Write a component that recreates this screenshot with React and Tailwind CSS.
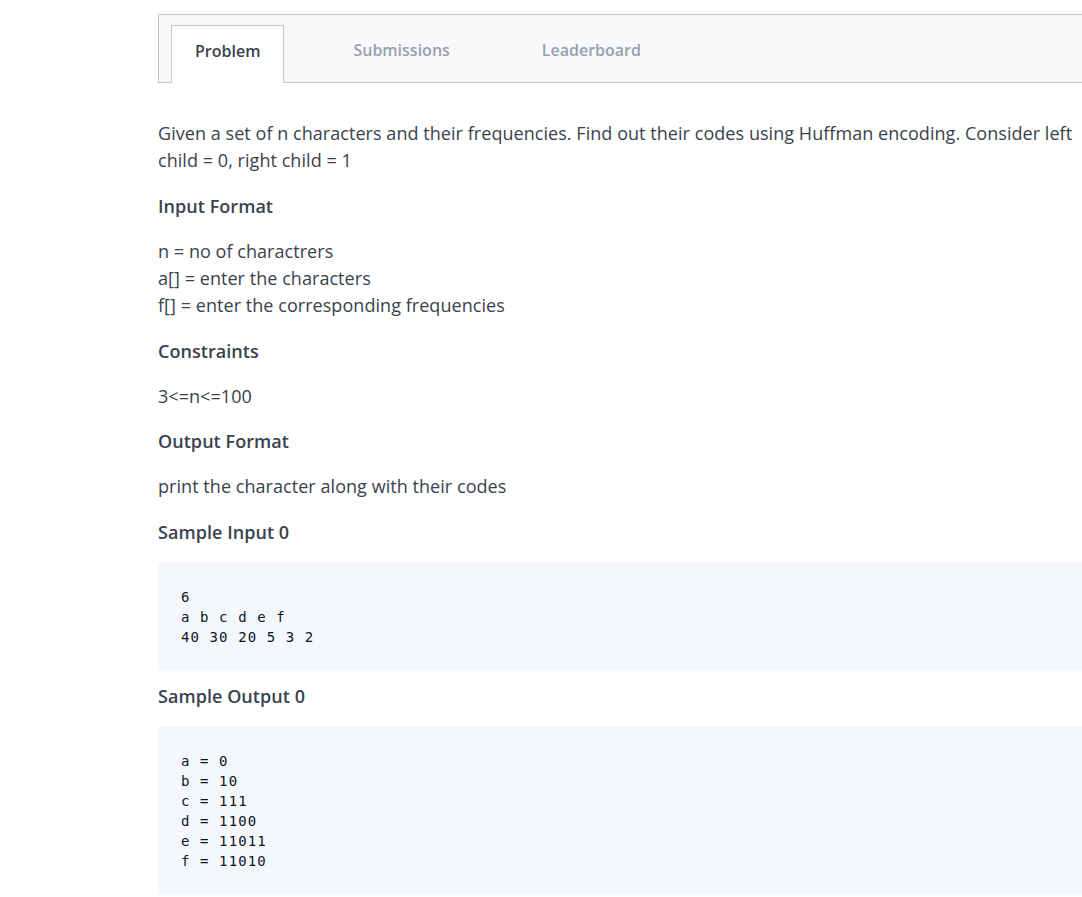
import React from 'react';

const tabs = ['Problem', 'Submissions', 'Leaderboard'];

function Heading({ children, className = '' }) {
  return <h3 className={`font-semibold text-[18px] leading-[27px] text-[#39424e] ${className}`}>{children}</h3>;
}

function Code({ lines, className = '' }) {
  return (
    <pre className={`bg-[#f4f8fd] pl-[23px] pt-6 pb-[23px] font-['DejaVu_Sans_Mono',monospace] text-[14px] leading-[20px] tracking-[1.1px] text-[#0e141e] ${className}`}>
      {lines.join('\n')}
    </pre>
  );
}

export default function App() {
  return (
    <div className="w-full overflow-hidden bg-white min-h-[897px] font-['Open_Sans',sans-serif] text-[#39424e]">
      <div className="ml-[158px] w-[945px] pt-[14px]">
        <div className="flex h-[69px] items-end border border-[#c2c7d0] bg-[#f8f9fb] pl-3">
          {tabs.map((t, i) => (
            <div
              key={t}
              className={
                i === 0
                  ? 'relative -mb-px flex h-[58px] items-center border border-b-0 border-[#c2c7d0] bg-white px-[23px] text-[16px] font-semibold text-[#39424e]'
                  : 'ml-[46px] flex h-[57px] items-center px-[23px] text-[16px] font-semibold text-[#979faf]'
              }
            >
              <span className="-mt-[8px]">{t}</span>
            </div>
          ))}
        </div>

        <div className="pt-[37px] text-[18px] leading-[27px] tracking-[0.05px]">
          <p>Given a set of n characters and their frequencies. Find out their codes using Huffman encoding. Consider left child = 0, right child = 1</p>

          <Heading className="mt-[18.5px]">Input Format</Heading>
          <p className="mt-[18px]">
            n = no of charactrers<br />
            a[] = enter the characters<br />
            f[] = enter the corresponding frequencies
          </p>

          <Heading className="mt-[19px]">Constraints</Heading>
          <p className="mt-[18px]">3&lt;=n&lt;=100</p>

          <Heading className="mt-[18px]">Output Format</Heading>
          <p className="mt-[18px]">print the character along with their codes</p>

          <Heading className="mt-[19px]">Sample Input 0</Heading>
          <Code className="mt-[17.5px]" lines={['6', 'a b c d e f', '40 30 20 5 3 2']} />

          <Heading className="mt-[12.5px]">Sample Output 0</Heading>
          <Code className="mt-[17.5px]" lines={['a = 0', 'b = 10', 'c = 111', 'd = 1100', 'e = 11011', 'f = 11010']} />
        </div>
      </div>
    </div>
  );
}
